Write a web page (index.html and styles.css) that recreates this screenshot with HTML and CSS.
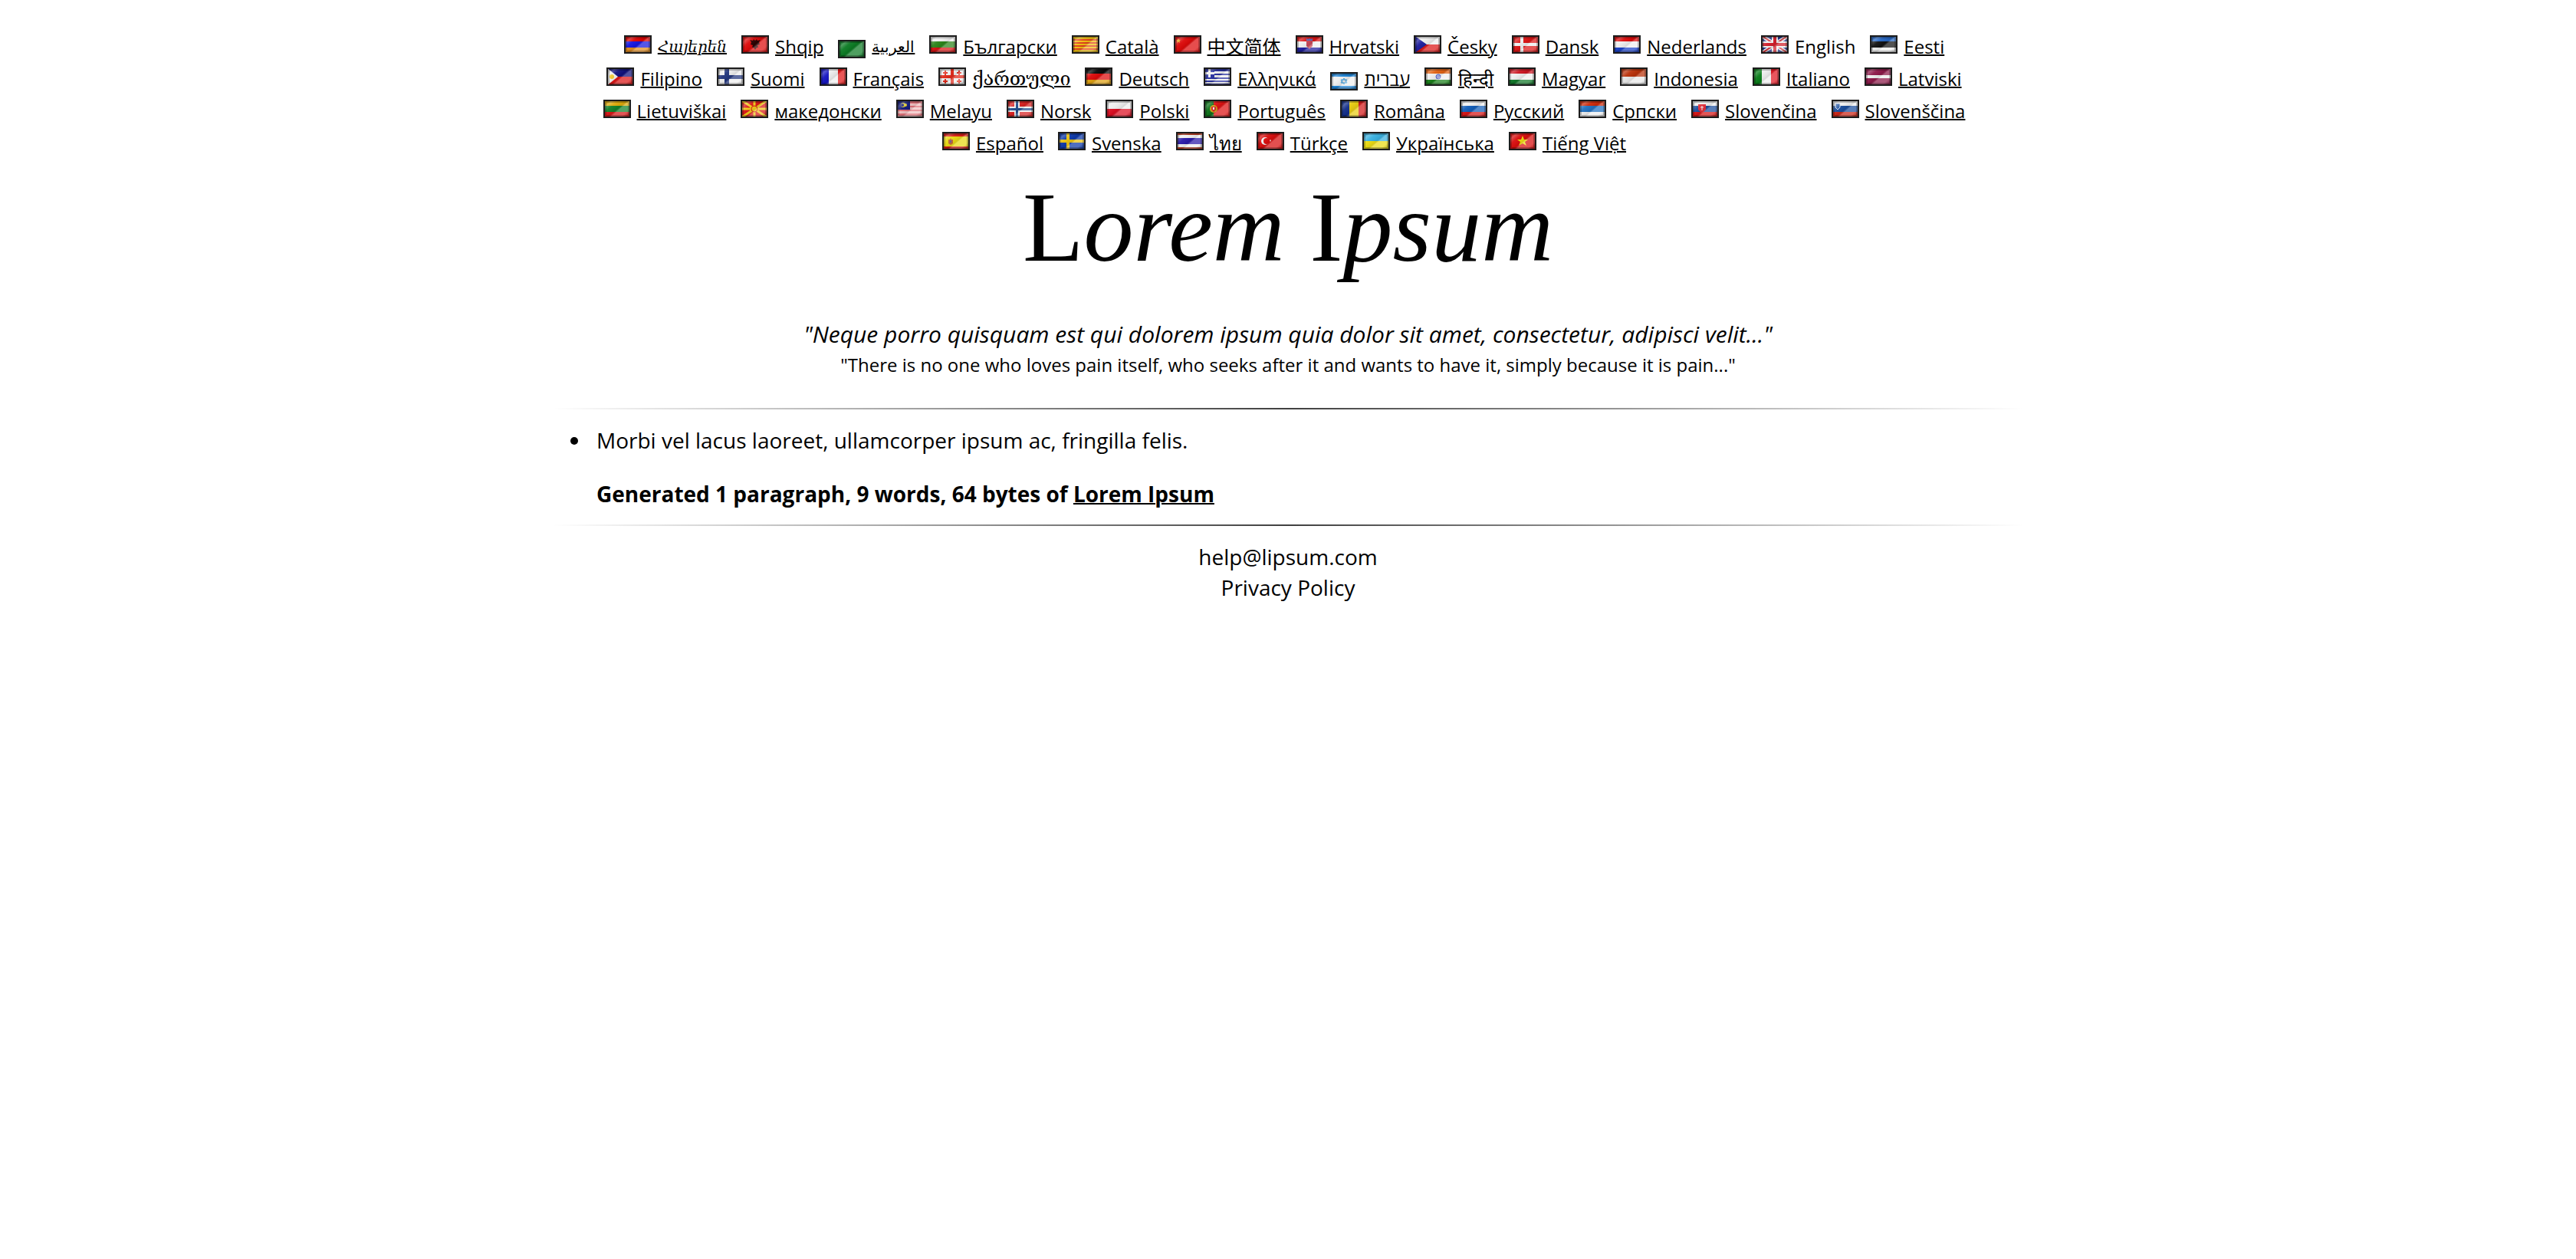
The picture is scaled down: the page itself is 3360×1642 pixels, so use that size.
FILE: index.html
```html
<!DOCTYPE html>
<html lang="en">
<head>
<meta charset="utf-8">
<title>Lorem Ipsum</title>
<link rel="stylesheet" href="styles.css">
</head>
<body>
<svg class="defs" aria-hidden="true">
  <defs>
    <linearGradient id="shine" gradientUnits="userSpaceOnUse" x1="4" y1="0" x2="28" y2="28">
      <stop offset="0" stop-color="#000" stop-opacity=".1"/>
      <stop offset=".16" stop-color="#fff" stop-opacity=".28"/>
      <stop offset=".3" stop-color="#fff" stop-opacity=".05"/>
      <stop offset=".48" stop-color="#000" stop-opacity=".06"/>
      <stop offset=".56" stop-color="#fff" stop-opacity=".28"/>
      <stop offset=".8" stop-color="#fff" stop-opacity=".28"/>
      <stop offset="1" stop-color="#000" stop-opacity=".25"/>
    </linearGradient>
    <g id="gloss">
      <path fill="url(#shine)" d="M0 0h36v24H0z"/>
      <path fill="none" stroke="#000" stroke-opacity=".25" stroke-width="2" d="M3 3h30v18H3z"/>
      <path fill="none" stroke="#1c1c1c" stroke-width="2" d="M1 1h34v22H1z"/>
    </g>
  </defs>
</svg>
<div class="page">
  <ul class="languages">
    <li><svg class="flag" viewBox="0 0 36 24" aria-hidden="true"><path fill="#d90000" d="M0 0h36v8H0z"/><path fill="#1414e0" d="M0 8h36v8H0z"/><path fill="#e08a1e" d="M0 16h36v8H0z"/><use href="#gloss"/></svg><a href="#hy" lang="hy">Հայերեն</a></li>
    <li><svg class="flag" viewBox="0 0 36 24" aria-hidden="true"><path fill="#dc0a0a" d="M0 0h36v24H0z"/><path fill="#2a0000" d="M18 7l2-2 1 2 4-1-2 3 1 3-3 1 1 3-2 0-2 3-2-3-2 0 1-3-3-1 1-3-2-3 4 1 1-2z"/><use href="#gloss"/></svg><a href="#sq" lang="sq">Shqip</a></li>
    <li class="rtl"><svg class="flag" viewBox="0 0 36 24" aria-hidden="true"><path fill="#0a7a22" d="M0 0h36v24H0z"/><use href="#gloss"/></svg><a href="#ar" lang="ar" dir="rtl">العربية</a></li>
    <li><svg class="flag" viewBox="0 0 36 24" aria-hidden="true"><path fill="#eee" d="M0 0h36v8H0z"/><path fill="#2a8418" d="M0 8h36v8H0z"/><path fill="#d81212" d="M0 16h36v8H0z"/><use href="#gloss"/></svg><a href="#bg" lang="bg">Български</a></li>
    <li><svg class="flag" viewBox="0 0 36 24" aria-hidden="true"><path fill="#f2c010" d="M0 0h36v24H0z"/><path fill="#e0401a" d="M0 5h36v2H0zM0 9h36v2H0zM0 13h36v2H0zM0 17h36v2H0z"/><use href="#gloss"/></svg><a href="#ca" lang="ca">Català</a></li>
    <li><svg class="flag" viewBox="0 0 36 24" aria-hidden="true"><path fill="#dc0808" d="M0 0h36v24H0z"/><path fill="#e8a010" d="M6 4l1 2h2L7.500 7.500 8 10 6 8.500 4 10l.5-2.500L3 6h2z"/><use href="#gloss"/></svg><a href="#zh" lang="zh">中文简体</a></li>
    <li><svg class="flag" viewBox="0 0 36 24" aria-hidden="true"><path fill="#dc1414" d="M0 0h36v8H0z"/><path fill="#eee" d="M0 8h36v8H0z"/><path fill="#1c1c9c" d="M0 16h36v8H0z"/><path fill="#c84858" d="M14 6h8v8l-4 4-4-4z"/><path fill="#5a64b0" d="M14 4l2 1 2-1 2 1 2-1v3h-8z"/><use href="#gloss"/></svg><a href="#hr" lang="hr">Hrvatski</a></li>
    <li><svg class="flag" viewBox="0 0 36 24" aria-hidden="true"><path fill="#eee" d="M0 0h36v12H0z"/><path fill="#dc1414" d="M0 12h36v12H0z"/><path fill="#1c1c9c" d="M0 0l17 12L0 24z"/><use href="#gloss"/></svg><a href="#cs" lang="cs">Česky</a></li>
    <li><svg class="flag" viewBox="0 0 36 24" aria-hidden="true"><path fill="#dc1414" d="M0 0h36v24H0z"/><path fill="#eee" d="M11 0h4v24h-4zM0 10h36v4H0z"/><use href="#gloss"/></svg><a href="#da" lang="da">Dansk</a></li>
    <li><svg class="flag" viewBox="0 0 36 24" aria-hidden="true"><path fill="#dc0808" d="M0 0h36v8H0z"/><path fill="#eee" d="M0 8h36v8H0z"/><path fill="#1840c8" d="M0 16h36v8H0z"/><use href="#gloss"/></svg><a href="#nl" lang="nl">Nederlands</a></li>
    <li><svg class="flag" viewBox="0 0 36 24" aria-hidden="true"><path fill="#20308c" d="M0 0h36v24H0z"/><path stroke="#eee" stroke-width="5" d="M0 0l36 24M36 0L0 24"/><path stroke="#d03038" stroke-width="2" d="M0 0l36 24M36 0L0 24"/><path fill="#eee" d="M14 0h8v24h-8zM0 8h36v8H0z"/><path fill="#d01c28" d="M16 0h4v24h-4zM0 10h36v4H0z"/><use href="#gloss"/></svg><span>English</span></li>
    <li><svg class="flag" viewBox="0 0 36 24" aria-hidden="true"><path fill="#2464c0" d="M0 0h36v8H0z"/><path fill="#101010" d="M0 8h36v8H0z"/><path fill="#eee" d="M0 16h36v8H0z"/><use href="#gloss"/></svg><a href="#et" lang="et">Eesti</a></li>
    <li><svg class="flag" viewBox="0 0 36 24" aria-hidden="true"><path fill="#10107c" d="M0 0h36v12H0z"/><path fill="#dc1414" d="M0 12h36v12H0z"/><path fill="#eee" d="M0 0l15 12L0 24z"/><circle cx="7" cy="12" r="3" fill="#f0c830"/><use href="#gloss"/></svg><a href="#fil" lang="fil">Filipino</a></li>
    <li><svg class="flag" viewBox="0 0 36 24" aria-hidden="true"><path fill="#eee" d="M0 0h36v24H0z"/><path fill="#20347c" d="M10 0h6v24h-6zM0 10h36v5H0z"/><use href="#gloss"/></svg><a href="#fi" lang="fi">Suomi</a></li>
    <li><svg class="flag" viewBox="0 0 36 24" aria-hidden="true"><path fill="#1414c0" d="M0 0h12v24H0z"/><path fill="#eee" d="M12 0h12v24H12z"/><path fill="#e01414" d="M24 0h12v24H24z"/><use href="#gloss"/></svg><a href="#fr" lang="fr">Français</a></li>
    <li><svg class="flag" viewBox="0 0 36 24" aria-hidden="true"><path fill="#eee" d="M0 0h36v24H0z"/><path fill="#e02818" d="M16 0h4v24h-4zM0 10h36v4H0zM8 4h2v2h2v2h-2v2H8V8H6V6h2zM26 4h2v2h2v2h-2v2h-2V8h-2V6h2zM8 15h2v2h2v2h-2v2H8v-2H6v-2h2zM26 15h2v2h2v2h-2v2h-2v-2h-2v-2h2z"/><use href="#gloss"/></svg><a href="#ka" lang="ka">ქართული</a></li>
    <li><svg class="flag" viewBox="0 0 36 24" aria-hidden="true"><path fill="#080808" d="M0 0h36v8H0z"/><path fill="#dc0808" d="M0 8h36v8H0z"/><path fill="#e0a010" d="M0 16h36v8H0z"/><use href="#gloss"/></svg><a href="#de" lang="de">Deutsch</a></li>
    <li><svg class="flag" viewBox="0 0 36 24" aria-hidden="true"><path fill="#2830a0" d="M0 0h36v24H0z"/><path fill="#eee" d="M14 5h22v3H14zM14 10h22v3H14zM0 15h36v2H0zM0 19h36v2H0zM6 0h3v13H6zM0 6h14v3H0z"/><use href="#gloss"/></svg><a href="#el" lang="el">Ελληνικά</a></li>
    <li class="rtl"><svg class="flag" viewBox="0 0 36 24" aria-hidden="true"><path fill="#eee" d="M0 0h36v24H0z"/><path fill="#1c84d8" d="M0 0h36v6H0zM0 18h36v6H0z"/><path fill="none" stroke="#3c9cdc" stroke-width="1" d="M18 8l4 6h-8zM18 16l4-6h-8z"/><use href="#gloss"/></svg><a href="#he" lang="he" dir="rtl">עברית</a></li>
    <li><svg class="flag" viewBox="0 0 36 24" aria-hidden="true"><path fill="#e06010" d="M0 0h36v8H0z"/><path fill="#eee" d="M0 8h36v8H0z"/><path fill="#188018" d="M0 16h36v8H0z"/><circle cx="18" cy="12" r="3" fill="#a8b0e8" stroke="#5060c8"/><use href="#gloss"/></svg><a href="#hi" lang="hi">हिन्दी</a></li>
    <li><svg class="flag" viewBox="0 0 36 24" aria-hidden="true"><path fill="#cc1420" d="M0 0h36v8H0z"/><path fill="#eee" d="M0 8h36v8H0z"/><path fill="#107828" d="M0 16h36v8H0z"/><use href="#gloss"/></svg><a href="#hu" lang="hu">Magyar</a></li>
    <li><svg class="flag" viewBox="0 0 36 24" aria-hidden="true"><path fill="#b83008" d="M0 0h36v12H0z"/><path fill="#e8e8e8" d="M0 12h36v12H0z"/><use href="#gloss"/></svg><a href="#id" lang="id">Indonesia</a></li>
    <li><svg class="flag" viewBox="0 0 36 24" aria-hidden="true"><path fill="#087c18" d="M0 0h12v24H0z"/><path fill="#eee" d="M12 0h12v24H12z"/><path fill="#e01420" d="M24 0h12v24H24z"/><use href="#gloss"/></svg><a href="#it" lang="it">Italiano</a></li>
    <li><svg class="flag" viewBox="0 0 36 24" aria-hidden="true"><path fill="#8c1848" d="M0 0h36v24H0z"/><path fill="#eee" d="M0 10h36v4H0z"/><use href="#gloss"/></svg><a href="#lv" lang="lv">Latviski</a></li>
    <li><svg class="flag" viewBox="0 0 36 24" aria-hidden="true"><path fill="#dca808" d="M0 0h36v8H0z"/><path fill="#108028" d="M0 8h36v8H0z"/><path fill="#d81414" d="M0 16h36v8H0z"/><use href="#gloss"/></svg><a href="#lt" lang="lt">Lietuviškai</a></li>
    <li><svg class="flag" viewBox="0 0 36 24" aria-hidden="true"><path fill="#d81414" d="M0 0h36v24H0z"/><path stroke="#f0c818" stroke-width="3" d="M0 0l36 24M36 0L0 24M18 0v24M0 12h36"/><circle cx="18" cy="12" r="4" fill="#f0c818" stroke="#d81414"/><use href="#gloss"/></svg><a href="#mk" lang="mk">македонски</a></li>
    <li><svg class="flag" viewBox="0 0 36 24" aria-hidden="true"><path fill="#f0c0c0" d="M0 0h36v24H0z"/><path fill="#e07078" d="M0 2h36v3H0zM0 8h36v2H0zM0 13h36v2H0zM0 18h36v3H0z"/><path fill="#101878" d="M0 0h18v13H0z"/><circle cx="9" cy="7" r="3" fill="#c8b830"/><circle cx="8" cy="7" r="2" fill="#101878"/><circle cx="12" cy="7" r="2" fill="#d8c830"/><use href="#gloss"/></svg><a href="#ms" lang="ms">Melayu</a></li>
    <li><svg class="flag" viewBox="0 0 36 24" aria-hidden="true"><path fill="#d82020" d="M0 0h36v24H0z"/><path fill="#eee" d="M10 0h7v24h-7zM0 9h36v7H0z"/><path fill="#204c8c" d="M12 0h3v24h-3zM0 11h36v3H0z"/><use href="#gloss"/></svg><a href="#no" lang="no">Norsk</a></li>
    <li><svg class="flag" viewBox="0 0 36 24" aria-hidden="true"><path fill="#eee" d="M0 0h36v12H0z"/><path fill="#dc0c20" d="M0 12h36v12H0z"/><use href="#gloss"/></svg><a href="#pl" lang="pl">Polski</a></li>
    <li><svg class="flag" viewBox="0 0 36 24" aria-hidden="true"><path fill="#0c7018" d="M0 0h14v24H0z"/><path fill="#dc1010" d="M13 0h23v24H13z"/><circle cx="13" cy="12" r="5" fill="#d0a018"/><path fill="#d82828" d="M10 9h6v4l-3 3-3-3z"/><path fill="#eee" d="M12 10h2v3h-2z"/><use href="#gloss"/></svg><a href="#pt" lang="pt">Português</a></li>
    <li><svg class="flag" viewBox="0 0 36 24" aria-hidden="true"><path fill="#102c88" d="M0 0h12v24H0z"/><path fill="#e8cc10" d="M12 0h12v24H12z"/><path fill="#d41818" d="M24 0h12v24H24z"/><use href="#gloss"/></svg><a href="#ro" lang="ro">Româna</a></li>
    <li><svg class="flag" viewBox="0 0 36 24" aria-hidden="true"><path fill="#eee" d="M0 0h36v8H0z"/><path fill="#105cb8" d="M0 8h36v8H0z"/><path fill="#d81414" d="M0 16h36v8H0z"/><use href="#gloss"/></svg><a href="#ru" lang="ru">Русский</a></li>
    <li><svg class="flag" viewBox="0 0 36 24" aria-hidden="true"><path fill="#cc2808" d="M0 0h36v8H0z"/><path fill="#2070c0" d="M0 8h36v8H0z"/><path fill="#eee" d="M0 16h36v8H0z"/><use href="#gloss"/></svg><a href="#sr" lang="sr">Српски</a></li>
    <li><svg class="flag" viewBox="0 0 36 24" aria-hidden="true"><path fill="#eee" d="M0 0h36v8H0z"/><path fill="#184c9c" d="M0 8h36v8H0z"/><path fill="#d81414" d="M0 16h36v8H0z"/><path fill="#e02c38" d="M9 6h10v7l-5 5-5-5z"/><path stroke="#eee" d="M14 8v6M12 10h4"/><use href="#gloss"/></svg><a href="#sk" lang="sk">Slovenčina</a></li>
    <li><svg class="flag" viewBox="0 0 36 24" aria-hidden="true"><path fill="#eee" d="M0 0h36v8H0z"/><path fill="#184c9c" d="M0 8h36v8H0z"/><path fill="#cc2414" d="M0 16h36v8H0z"/><path fill="#3060a8" stroke="#d8e0f0" d="M5 5h6v5l-3 3-3-3z"/><use href="#gloss"/></svg><a href="#sl" lang="sl">Slovenščina</a></li>
    <li><svg class="flag" viewBox="0 0 36 24" aria-hidden="true"><path fill="#d81c14" d="M0 0h36v24H0z"/><path fill="#e8d810" d="M0 6h36v13H0z"/><path fill="#c06838" d="M8 10h2l1-2 1 2h2v5l-3 2-3-2z"/><path fill="#706090" d="M10 11h2v3h-2z"/><use href="#gloss"/></svg><a href="#es" lang="es">Español</a></li>
    <li><svg class="flag" viewBox="0 0 36 24" aria-hidden="true"><path fill="#0c38a8" d="M0 0h36v24H0z"/><path fill="#e8c010" d="M11 0h4v24h-4zM0 10h36v4H0z"/><use href="#gloss"/></svg><a href="#sv" lang="sv">Svenska</a></li>
    <li><svg class="flag" viewBox="0 0 36 24" aria-hidden="true"><path fill="#d04020" d="M0 0h36v24H0z"/><path fill="#eee" d="M0 4h36v16H0z"/><path fill="#2818a8" d="M0 8h36v8H0z"/><use href="#gloss"/></svg><a href="#th" lang="th">ไทย</a></li>
    <li><svg class="flag" viewBox="0 0 36 24" aria-hidden="true"><path fill="#d80c0c" d="M0 0h36v24H0z"/><circle cx="11" cy="12" r="5" fill="#eee"/><circle cx="13" cy="12" r="4" fill="#d80c0c"/><path fill="#eee" d="M17 11l1-1 1 1-1 2z"/><use href="#gloss"/></svg><a href="#tr" lang="tr">Türkçe</a></li>
    <li><svg class="flag" viewBox="0 0 36 24" aria-hidden="true"><path fill="#38b0e0" d="M0 0h36v12H0z"/><path fill="#ecdc10" d="M0 12h36v12H0z"/><use href="#gloss"/></svg><a href="#uk" lang="uk">Українська</a></li>
    <li><svg class="flag" viewBox="0 0 36 24" aria-hidden="true"><path fill="#d80c0c" d="M0 0h36v24H0z"/><path fill="#f0dc10" d="M18 5l2 5h5l-4 3 2 5-5-3-5 3 2-5-4-3h5z"/><use href="#gloss"/></svg><a href="#vi" lang="vi">Tiếng Việt</a></li>
  </ul>

  <header class="title">
    <h1><span class="initial">L</span>orem <span class="initial">I</span>psum</h1>
    <p class="quote">"Neque porro quisquam est qui dolorem ipsum quia dolor sit amet, consectetur, adipisci velit..."</p>
    <p class="translation">"There is no one who loves pain itself, who seeks after it and wants to have it, simply because it is pain..."</p>
  </header>

  <hr>

  <main class="generated">
    <ul>
      <li>Morbi vel lacus laoreet, ullamcorper ipsum ac, fringilla felis.</li>
    </ul>
    <p class="summary">Generated 1 paragraph, 9 words, 64 bytes of <a href="#home">Lorem Ipsum</a></p>
  </main>

  <hr>

  <footer>
    <a href="mailto:help@lipsum.com">help@lipsum.com</a>
    <a href="#privacy">Privacy Policy</a>
  </footer>
</div>
</body>
</html>
```
FILE: styles.css
```css
* {
  box-sizing: border-box;
}

body {
  margin: 0;
  background: #fff;
  color: #000;
  font-family: "Open Sans", "Liberation Sans", "Noto Sans CJK SC", sans-serif;
  font-size: 28px;
  line-height: 40px;
}

h1,
p,
ul {
  margin: 0;
  padding: 0;
}

a {
  color: inherit;
  text-decoration-thickness: 2px;
}

.defs {
  position: absolute;
  width: 0;
  height: 0;
}

.page {
  max-width: 1920px;
  margin: 0 auto;
  padding-top: 40px;
}

.languages {
  display: flex;
  flex-wrap: wrap;
  justify-content: center;
  column-gap: 9px;
  max-width: 1800px;
  margin: 0 auto;
  list-style: none;
  font-size: 24px;
  line-height: 42px;
}

.languages li {
  display: flex;
  gap: 8px;
  height: 42px;
  padding-right: 10px;
}

.languages :lang(hy) {
  font-family: "DejaVu Serif", serif;
  font-size: 20px;
  font-style: italic;
}

.languages :lang(ar) {
  font-size: 20px;
}

.languages :lang(ka) {
  font-family: "DejaVu Serif", serif;
  font-size: 25px;
}

.flag {
  width: 36px;
  height: 24px;
  margin-top: 6px;
}

.rtl .flag {
  margin-top: 12px;
}

.title {
  padding-bottom: 36px;
  text-align: center;
}

h1 {
  font-family: "Liberation Serif", serif;
  font-size: 130px;
  font-style: italic;
  font-weight: 400;
  line-height: 176px;
}

.initial {
  font-style: normal;
}

.quote {
  padding-top: 32px;
  font-size: 30px;
  font-style: italic;
}

.translation {
  font-size: 24px;
}

hr {
  height: 2px;
  margin: 0;
  border: 0;
  background: linear-gradient(to right, transparent, rgba(0, 0, 0, 0.75), transparent);
}

.generated {
  padding: 20px 58px;
}

.generated ul {
  margin-left: -7px;
}

.generated li {
  padding-left: 7px;
}

.summary {
  padding-top: 30px;
  font-weight: 700;
}

footer {
  display: flex;
  flex-direction: column;
  align-items: center;
  padding-top: 20px;
}

footer a {
  text-decoration: none;
}
```
